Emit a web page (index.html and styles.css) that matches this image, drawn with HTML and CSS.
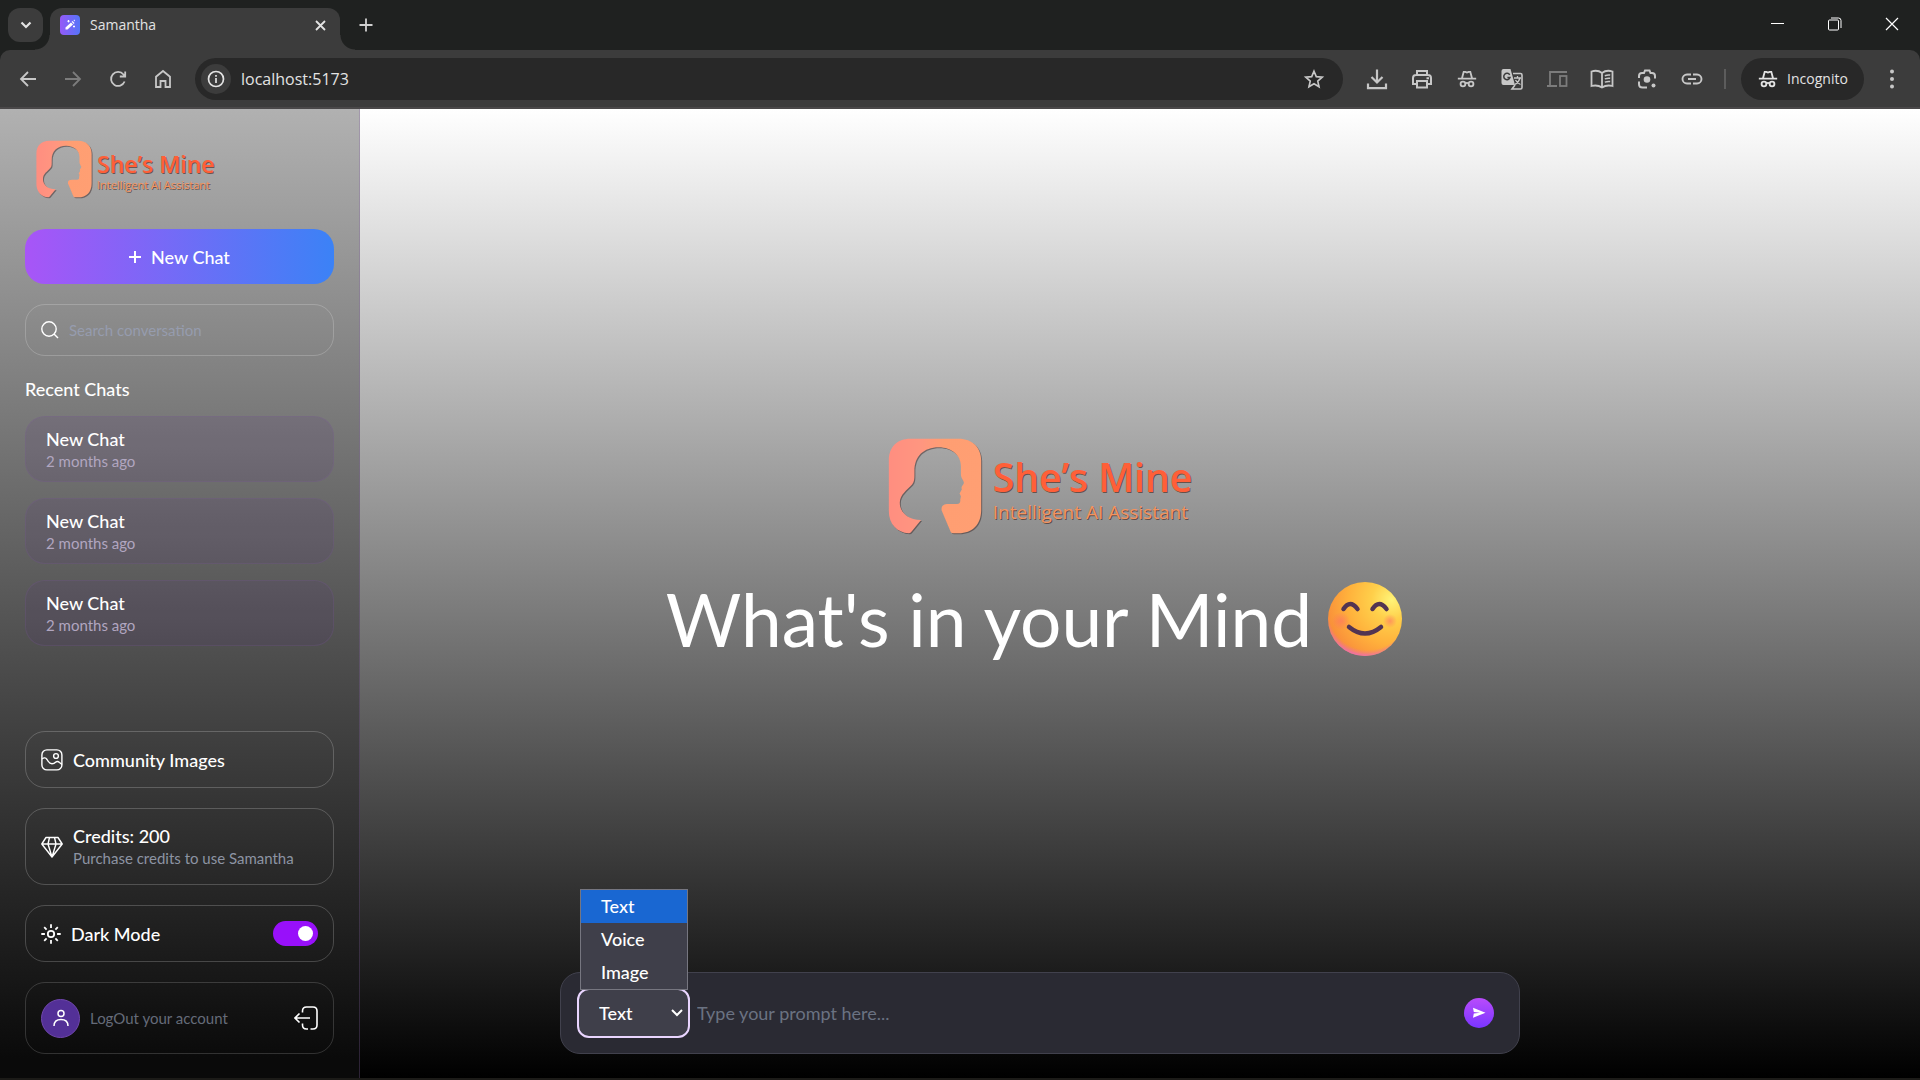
FILE: index.html
```html
<!DOCTYPE html>
<html lang="en">
<head>
<meta charset="utf-8">
<meta name="viewport" content="width=device-width, initial-scale=1">
<title>Samantha</title>
<link rel="stylesheet" href="styles.css">
</head>
<body>
<svg class="defs" aria-hidden="true">
  <defs>
    <linearGradient id="markFill" x1="0" x2="1" y1="0" y2="0">
      <stop offset="0" stop-color="#ff8e80"/><stop offset="0.35" stop-color="#ff9680"/><stop offset="0.6" stop-color="#ff9e72"/><stop offset="1" stop-color="#ff9f73"/>
    </linearGradient>
    <symbol id="mark" viewBox="88 55 282 289">
      <path d="M150 342C115 340 90 315 90 275V122C90 82 115 57 155 57H300C342 57 368 84 368 122V272C368 315 342 342 300 342H284Q278 342 276 337L249 273C247 259 255 254 270 254H295C304 254 306 248 305 241L307 230 303 222 310 209C305 202 316 196 316 190C316 184 307 176 307 165V140C307 108 280 83 240 83C195 83 167 110 167 155C167 175 168 185 160 195C145 212 123 225 123 250C123 280 150 302 187 302L158 337Q154 342 150 342Z"/>
    </symbol>
    <symbol id="incog" viewBox="0 0 24 24">
      <path d="M2 11.500h20M6.600 11 8.400 4.200h1.800l1.800.8 1.800-.8h1.800L17.400 11" fill="none" stroke="currentColor" stroke-width="2"/>
      <circle cx="7.600" cy="17.500" r="2.600" fill="none" stroke="currentColor" stroke-width="2"/>
      <circle cx="16.400" cy="17.500" r="2.600" fill="none" stroke="currentColor" stroke-width="2"/>
      <path d="M10 17q2-1.400 4 0" fill="none" stroke="currentColor" stroke-width="1.800"/>
    </symbol>
  </defs>
</svg>

<header class="browser">
  <div class="tabstrip">
    <button class="tab-search" aria-label="Search tabs"><svg width="12" height="8" viewBox="0 0 12 8"><path d="M1.500 1.500 6 6l4.500-4.500" fill="none" stroke="currentColor" stroke-width="2.200"/></svg></button>
    <div class="tab">
      <svg width="20" height="20" viewBox="0 0 20 20">
        <defs><linearGradient id="fav" x1="0" x2="1" y1="0" y2="0"><stop offset="0" stop-color="#955af7"/><stop offset="1" stop-color="#5574f8"/></linearGradient></defs>
        <rect width="20" height="20" rx="4" fill="url(#fav)"/>
        <path d="M5.500 12.500 11 7.500l2 2-5.500 5H5.500z" fill="#fff"/><path d="M11.600 6.800 12.500 6l2 2-.8.9z" fill="#fff"/>
        <path d="M8.500 5v2.400M7.300 6.200h2.400M14 10.500v2M13 11.500h2M14.300 4.800v1.400" stroke="#fff"/>
      </svg>
      <span class="tab-title">Samantha</span>
      <button class="tab-close" aria-label="Close tab"><svg width="11" height="11" viewBox="0 0 11 11"><path d="M1 1l9 9M10 1l-9 9" stroke="currentColor" stroke-width="1.800"/></svg></button>
    </div>
    <button class="tab-new" aria-label="New tab"><svg width="14" height="14" viewBox="0 0 14 14"><path d="M7 0.500v13M0.500 7h13" stroke="currentColor" stroke-width="1.800"/></svg></button>
    <div class="window-controls">
      <button aria-label="Minimize"><svg width="14" height="14" viewBox="0 0 14 14"><path d="M0 6.500h13" stroke="currentColor"/></svg></button>
      <button aria-label="Restore"><svg width="14" height="14" viewBox="0 0 14 14" fill="none" stroke="currentColor"><rect x="0.500" y="3" width="10" height="10" rx="1"/><path d="M3 1h7.500q2.500 0 2.500 2.500V11"/></svg></button>
      <button aria-label="Close"><svg width="14" height="14" viewBox="0 0 14 14"><path d="M1 1l12 12M13 1L1 13" stroke="currentColor" stroke-width="1.200"/></svg></button>
    </div>
  </div>

  <div class="toolbar">
    <button class="tool" aria-label="Back"><svg width="24" height="24" viewBox="0 0 24 24"><path d="M20 12H5.500M12 5l-7 7 7 7" fill="none" stroke="currentColor" stroke-width="1.800"/></svg></button>
    <button class="tool dim" aria-label="Forward"><svg width="24" height="24" viewBox="0 0 24 24"><path d="M4 12h14.500M12 5l7 7-7 7" fill="none" stroke="currentColor" stroke-width="1.800"/></svg></button>
    <button class="tool" aria-label="Reload"><svg width="24" height="24" viewBox="0 0 24 24"><path d="M18.600 14.500A7 7 0 1 1 17.500 7.500L19 9.300M19.200 4.500v5h-5.400" fill="none" stroke="currentColor" stroke-width="1.800"/></svg></button>
    <button class="tool" aria-label="Home"><svg width="24" height="24" viewBox="0 0 24 24"><path d="M5 20V9.700L12 4l7 5.700V20h-4.500v-6h-5v6z" fill="none" stroke="currentColor" stroke-width="1.800"/></svg></button>
    <div class="omnibox">
      <button class="site-info" aria-label="Site information"><svg width="18" height="18" viewBox="0 0 18 18"><circle cx="9" cy="9" r="7.500" fill="none" stroke="currentColor" stroke-width="1.700"/><path d="M9 8v5M9 5v1.800" stroke="currentColor" stroke-width="1.700"/></svg></button>
      <input class="url" type="text" aria-label="Address" value="localhost:5173">
      <button class="star" aria-label="Bookmark"><svg width="22" height="22" viewBox="0 0 24 24"><path d="M12 3.500 14.500 9.400 21 10l-4.900 4.300L17.500 20.500 12 17.200 6.500 20.500l1.400-6.200L3 10l6.500-.6z" fill="none" stroke="currentColor" stroke-width="1.800"/></svg></button>
    </div>
    <div class="extensions">
      <button class="tool" aria-label="Downloads"><svg width="24" height="24" viewBox="0 0 24 24"><path d="M12 2.500v13M6.500 10 12 15.500 17.500 10M3 16.500V21.200h18V16.500" fill="none" stroke="currentColor" stroke-width="2.200"/></svg></button>
      <button class="tool" aria-label="Print"><svg width="24" height="24" viewBox="0 0 24 24" fill="none" stroke="currentColor" stroke-width="2"><path d="M7 8V4h10v4M7 17H3v-6q0-3 3-3h12q3 0 3 3v6h-4"/><path d="M7 14h10v6.500H7zM16.500 11.200H19"/></svg></button>
      <button class="tool" aria-label="Incognito window"><svg width="22" height="22"><use href="#incog"/></svg></button>
      <button class="tool" aria-label="Translate"><svg width="24" height="24" viewBox="0 0 24 24"><path d="M2 2h8.500l4.500 16H3.500Q1.500 18 1.500 16V4Q1.500 2 3.500 2z" fill="currentColor"/><path d="M13 6.500h7.500q1.500 0 1.500 1.500v12.500q0 1.500-1.500 1.500H12l3-4" fill="none" stroke="currentColor" stroke-width="1.600"/><path d="M9.700 7.800A3.200 3.200 0 1 0 10 10.500H7.400" fill="none" stroke="#3c3c3c" stroke-width="1.500"/><path d="M14 11h7M17.500 9v2M20 11q-1 4-5 6.500M15.500 13q2 3.500 5 4.500" fill="none" stroke="currentColor" stroke-width="1.300"/></svg></button>
      <button class="tool dim" aria-label="Send to your devices"><svg width="24" height="24" viewBox="0 0 24 24" fill="none" stroke="currentColor" stroke-width="1.800"><path d="M22 5H5v13.500M2 19h10"/><rect x="15" y="9" width="6.500" height="10"/></svg></button>
      <button class="tool" aria-label="Reading mode"><svg width="26" height="24" viewBox="0 0 26 24" fill="none" stroke="currentColor" stroke-width="1.800"><path d="M13 6Q8.500 2.500 2.500 4.500v14.500Q8.500 17.500 13 20.500 17.500 17.500 23.500 19V4.500Q17.500 2.500 13 6v14"/><path d="M15.800 8.700q3-1 5.400-.6M15.800 11.900q3-1 5.400-.6M15.800 15.100q3-1 5.400-.6" stroke-width="1.500"/></svg></button>
      <button class="tool" aria-label="Lens"><svg width="24" height="24" viewBox="0 0 24 24"><path d="M4 11V9q0-3 3-3h2l1-2.500h4.500l1 2.500H17q3 0 3 3v2.500M4 14.500V17q0 3.500 3.500 3.500H12" fill="none" stroke="currentColor" stroke-width="2"/><circle cx="12" cy="12.500" r="3.300" fill="currentColor"/><circle cx="18.500" cy="18.500" r="2" fill="currentColor"/></svg></button>
      <button class="tool" aria-label="Copy link"><svg width="24" height="24" viewBox="0 0 24 24"><path d="M11 7.500H7a4.500 4.500 0 0 0 0 9h4M13 7.500h4a4.500 4.500 0 0 1 0 9h-4M8 12h8" fill="none" stroke="currentColor" stroke-width="1.900"/></svg></button>
    </div>
    <span class="divider"></span>
    <button class="profile"><svg width="22" height="22"><use href="#incog"/></svg>Incognito</button>
    <button class="tool menu" aria-label="Menu"><svg width="6" height="20" viewBox="0 0 6 20" fill="currentColor"><circle cx="3" cy="2.500" r="2"/><circle cx="3" cy="10" r="2"/><circle cx="3" cy="17.500" r="2"/></svg></button>
  </div>
</header>

<div class="app">
  <aside class="sidebar">
    <div class="brand">
      <svg class="brand-mark" fill="url(#markFill)"><use href="#mark"/></svg>
      <div class="brand-text"><span class="brand-name">She’s Mine</span><span class="brand-tag">Intelligent AI Assistant</span></div>
    </div>
    <button class="new-chat"><svg width="12" height="12" viewBox="0 0 12 12"><path d="M6 0v12M0 6h12" stroke="currentColor" stroke-width="2"/></svg>New Chat</button>
    <label class="search">
      <svg width="18" height="18" viewBox="0 0 18 18" fill="none" stroke="currentColor" stroke-width="1.400"><circle cx="8" cy="8" r="7.200"/><path d="M13 13l4 4"/></svg>
      <input type="text" placeholder="Search conversation" aria-label="Search conversation">
    </label>
    <h2 class="recent-title">Recent Chats</h2>
    <ul class="chats">
      <li class="chat"><p>New Chat</p><p class="chat-time">2 months ago</p></li>
      <li class="chat"><p>New Chat</p><p class="chat-time">2 months ago</p></li>
      <li class="chat"><p>New Chat</p><p class="chat-time">2 months ago</p></li>
    </ul>
    <a class="panel" href="#community">
      <svg width="22" height="22" viewBox="0 0 22 22" fill="none" stroke="currentColor" stroke-width="1.400"><rect x="0.900" y="0.900" width="20" height="20" rx="5"/><circle cx="15" cy="7" r="2.400"/><path d="M1 10q3-2.500 5 .5 2 4 5 4.200 2.200 0 3.500-1.500 2-1.700 4 .3l2.500 2"/></svg>
      <span>Community Images</span>
    </a>
    <a class="panel credits" href="#credits">
      <svg width="22" height="22" viewBox="0 0 22 22" fill="none" stroke="currentColor" stroke-width="1.400" stroke-linejoin="round"><path d="M5 1.500h12L21.200 8 11 21 .8 8zM.8 8h20.400M8.500 1.500 7 8l4 13 4-13-1.500-6.500"/></svg>
      <span>Credits: 200<small>Purchase credits to use Samantha</small></span>
    </a>
    <label class="panel theme">
      <svg width="20" height="20" viewBox="0 0 20 20" fill="none" stroke="currentColor" stroke-width="1.800"><circle cx="10" cy="10" r="3.200"/><path d="M10 .3v3.600M10 16.100v3.600M.3 10h3.600M16.100 10h3.600M3.200 3.200l2.400 2.400M14.400 14.400l2.400 2.400M3.200 16.800l2.400-2.400M14.400 5.600l2.400-2.400"/></svg>
      <span>Dark Mode</span>
      <input class="switch" type="checkbox" checked>
    </label>
    <div class="panel account">
      <span class="avatar"><svg width="18" height="18" viewBox="0 0 18 18" fill="none" stroke="currentColor" stroke-width="1.500"><circle cx="9" cy="4.500" r="3"/><path d="M2 17q0-6.500 7-6.500t7 6.500"/></svg></span>
      <span class="account-text">LogOut your account</span>
      <button class="logout" aria-label="Log out"><svg width="24" height="24" viewBox="0 0 24 24" fill="none" stroke="currentColor" stroke-width="1.600"><path d="M8.500 6.500V5q0-4 4-4H19q4 0 4 4v14q0 4-4 4h-2.500M8.500 17.500V19q0 4 4 4H14M16 12H1M5.500 7.500 1 12l4.500 4.500"/></svg></button>
    </div>
  </aside>

  <main class="main">
    <section class="hero">
      <div class="brand brand-large">
        <svg class="brand-mark" fill="url(#markFill)"><use href="#mark"/></svg>
        <div class="brand-text"><span class="brand-name">She’s Mine</span><span class="brand-tag">Intelligent AI Assistant</span></div>
      </div>
      <h1 class="headline">What's in your Mind
        <svg width="74" height="74" viewBox="0 0 74 74" role="img" aria-label="Smiling face">
          <defs>
            <radialGradient id="face" cx="0.860" cy="0.240" r="0.900"><stop offset="0" stop-color="#fff478"/><stop offset="0.300" stop-color="#ffcf4a"/><stop offset="0.650" stop-color="#ffb23c"/><stop offset="1" stop-color="#f98f3a"/></radialGradient>
            <radialGradient id="glow" cx="0.540" cy="0.380" r="0.640"><stop offset="0.840" stop-color="#f070a0" stop-opacity="0"/><stop offset="1" stop-color="#ea66c8"/></radialGradient>
            <radialGradient id="cheek"><stop offset="0" stop-color="#ff6f68" stop-opacity="0.600"/><stop offset="1" stop-color="#ff6f68" stop-opacity="0"/></radialGradient>
          </defs>
          <circle cx="37" cy="37" r="37" fill="url(#face)"/><circle cx="37" cy="37" r="37" fill="url(#glow)"/>
          <circle cx="13" cy="39" r="9" fill="url(#cheek)"/><circle cx="62" cy="39" r="7" fill="url(#cheek)"/>
          <g fill="none" stroke="#533452" stroke-width="4.500" stroke-linecap="round"><path d="M15.500 27q6.500-10 14 0M44.500 27q6.500-10 14 0M21 45q16 13 32 0"/></g>
        </svg>
      </h1>
    </section>
    <form class="prompt">
      <div class="mode">
        <select aria-label="Mode"><option>Text</option><option>Voice</option><option>Image</option></select>
        <svg class="mode-arrow" width="12" height="8" viewBox="0 0 12 8"><path d="M1 1l5 5 5-5" fill="none" stroke="currentColor" stroke-width="2"/></svg>
        <ul class="mode-list"><li class="selected">Text</li><li>Voice</li><li>Image</li></ul>
      </div>
      <input class="prompt-input" type="text" placeholder="Type your prompt here..." aria-label="Prompt">
      <button class="send" type="button" aria-label="Send"><svg width="14" height="12" viewBox="0 0 14 12"><path d="M1 .8 13.500 5.800 1 10.800 1.800 6.500 8 5.800 1.800 5.100z" fill="#fff"/></svg></button>
    </form>
  </main>
</div>
</body>
</html>
```
FILE: styles.css
```css
* { box-sizing: border-box; margin: 0; padding: 0; }

body {
  min-height: 100vh;
  display: flex;
  flex-direction: column;
  background: #1f2120;
  color: #fff;
  font-family: Lato, "Open Sans", sans-serif;
  font-size: 18px;
  line-height: 22px;
}

button, input, select { font: inherit; color: inherit; background: none; border: 0; outline: 0; }
button { display: inline-flex; align-items: center; justify-content: center; }
ul { list-style: none; }
a { color: inherit; text-decoration: none; }
svg { flex: none; display: block; }
.defs { position: absolute; width: 0; height: 0; }

/* Browser frame */
.browser { font-family: "Open Sans", "Noto Sans", sans-serif; }
.tabstrip { display: flex; height: 50px; padding: 8px 0 0 8px; background: #1f2120; }
.tab-search { width: 35px; height: 34px; border-radius: 12px; background: #3c3c3c; color: #e3e3e3; margin-right: 7px; }
.tab {
  position: relative;
  display: flex;
  align-items: center;
  gap: 10px;
  width: 290px;
  padding: 0 10px 8px;
  border-radius: 12px 12px 0 0;
  background: #3c3c3c;
}
.tab::before, .tab::after {
  content: "";
  position: absolute;
  bottom: 0;
  width: 15px;
  height: 15px;
}
.tab::before { right: 100%; background: radial-gradient(circle at 0 0, transparent 14px, #3c3c3c 15px); }
.tab::after { left: 100%; background: radial-gradient(circle at 100% 0, transparent 14px, #3c3c3c 15px); }
.tab-title { flex: 1; font-size: 14px; color: #e3e3e3; }
.tab-close { width: 20px; height: 20px; color: #e3e3e3; }
.tab-new { width: 34px; height: 34px; margin-left: 9px; color: #d0d0d0; }
.window-controls { display: flex; margin-left: auto; height: 32px; }
.window-controls button { width: 57px; }

.toolbar {
  display: flex;
  align-items: center;
  height: 59px;
  padding: 0 6px 0 5px;
  background: #3c3c3c;
  border-bottom: 2px solid #4a4849;
  border-radius: 10px 10px 0 0;
}
.tool { width: 45px; height: 42px; color: #c7c7c7; }
.tool.dim { color: #7c7c7c; }
.omnibox {
  flex: 1;
  display: flex;
  align-items: center;
  height: 42px;
  margin: 0 11px 0 10px;
  padding: 0 18px 0 6px;
  border-radius: 21px;
  background: #282828;
}
.site-info { width: 30px; height: 30px; border-radius: 50%; background: #3c3c3c; color: #e3e3e3; }
.url { flex: 1; min-width: 0; padding-left: 10px; font-size: 16px; color: #e3e3e3; }
.star { color: #c7c7c7; }
.extensions { display: flex; }
.divider { width: 2px; height: 20px; margin: 0 15px 0 10px; background: #5c5c5c; }
.profile { gap: 8px; width: 123px; height: 42px; border-radius: 21px; background: #282828; color: #e3e3e3; font-size: 14px; margin-right: 5px; }

/* App */
.app {
  flex: 1;
  display: flex;
  border-bottom: 2px solid #1c1b18;
  background: linear-gradient(#fff, #000);
}
.sidebar {
  display: flex;
  flex-direction: column;
  width: 360px;
  padding: 25px 25px 24px;
  border-right: 1px solid rgba(128, 96, 159, 0.3);
  background: linear-gradient(#b1b1b1, #444 62%, #0a0a0a 98%);
}

.brand { display: flex; align-items: center; gap: 5px; height: 70px; margin-left: 11px; margin-bottom: 25px; font-family: "Open Sans", "Noto Sans", sans-serif; }
.brand-mark { width: 56px; height: 58px; filter: drop-shadow(1px 1px 0 rgba(60, 40, 40, 0.5)); }
.brand-text { display: flex; flex-direction: column; padding-top: 5px; white-space: nowrap; }
.brand-name { font-size: 23px; line-height: 26px; font-weight: 600; color: #ff5f38; text-shadow: 1px 1px 0 rgba(70, 30, 20, 0.6); }
.brand-tag { font-size: 11px; line-height: 15px; font-weight: 500; color: #f4925e; text-shadow: 1px 1px 0 rgba(60, 30, 20, 0.6); }

.new-chat { gap: 10px; height: 55px; border-radius: 20px; background: linear-gradient(90deg, #a855f7, #3b82f6); font-weight: 500; }
.search {
  display: flex;
  align-items: center;
  gap: 10px;
  height: 52px;
  margin-top: 20px;
  padding: 0 15px;
  border: 1px solid rgba(255, 255, 255, 0.2);
  border-radius: 20px;
}
.search input { flex: 1; min-width: 0; font-size: 15px; }
.search input::placeholder { color: #969cae; opacity: 1; }
.recent-title { margin-top: 22px; font-size: 18px; font-weight: 500; line-height: 22px; }
.chats { flex: 1; display: flex; flex-direction: column; gap: 16px; margin-top: 16px; }
.chat {
  height: 66px;
  padding: 11px 20px;
  border: 1px solid rgba(128, 96, 159, 0.2);
  border-radius: 20px;
  background: rgba(87, 49, 124, 0.13);
  font-weight: 500;
}
.chat-time { font-size: 15px; font-weight: 400; color: #b1a6c0; }

.panel {
  display: flex;
  align-items: center;
  gap: 10px;
  height: 57px;
  margin-top: 20px;
  padding: 0 15px;
  border: 1px solid rgba(255, 255, 255, 0.2);
  border-radius: 20px;
  font-weight: 500;
}
.credits { height: 77px; }
.credits small { display: block; font-size: 15px; font-weight: 400; color: #8d94a3; }
.account { height: 72px; border-color: rgba(255, 255, 255, 0.16); }
.avatar { display: grid; place-items: center; width: 39px; height: 39px; border: 1px solid #7047ad; border-radius: 50%; background: #533097; }
.account-text { flex: 1; font-size: 15px; font-weight: 400; color: #656b79; }
.switch {
  appearance: none;
  display: flex;
  justify-content: flex-end;
  width: 45px;
  height: 25px;
  margin-left: auto;
  padding: 5px;
  border-radius: 13px;
  background: #9810fa;
}
.switch::after { content: ""; width: 15px; height: 15px; border-radius: 50%; background: #fff; }

.main { flex: 1; display: flex; flex-direction: column; align-items: center; padding: 22px 200px 24px 0; }
.hero { flex: 1; display: flex; flex-direction: column; align-items: center; justify-content: center; }
.brand-large { gap: 11px; height: 96px; margin: 0 0 38px; }
.brand-large .brand-mark { width: 94px; height: 96px; }
.brand-large .brand-name { font-size: 39px; line-height: 47px; }
.brand-large .brand-tag { font-size: 19px; line-height: 24px; }
.headline { display: flex; align-items: center; gap: 16px; padding-right: 12px; font-size: 73px; line-height: 94px; font-weight: 400; white-space: nowrap; }

.prompt {
  display: flex;
  align-items: center;
  width: 100%;
  max-width: 960px;
  height: 82px;
  padding: 0 25px 0 16px;
  border: 1px solid #41414d;
  border-radius: 20px;
  background: #2a2a33;
}
.mode { position: relative; width: 113px; }
.mode select { appearance: none; display: block; width: 113px; height: 50px; padding: 0 20px; border: 2px solid #e9d5ff; border-radius: 12px; background: #3f3f4a; font-weight: 500; }
.mode-arrow { position: absolute; right: 7px; top: 21px; }
.mode-list { position: absolute; left: 3px; bottom: 48px; width: 108px; border: 1px solid #767680; background: #3f3f4a; font-weight: 500; }
.mode-list li { padding: 0 20px; line-height: 33px; }
.mode-list .selected { background: #1967d2; }
.prompt-input { flex: 1; min-width: 0; padding-left: 7px; }
.prompt-input::placeholder { color: #6a7282; opacity: 1; }
.send { width: 30px; height: 30px; border-radius: 50%; background: linear-gradient(#b94cfb, #7a35ff); }
```
